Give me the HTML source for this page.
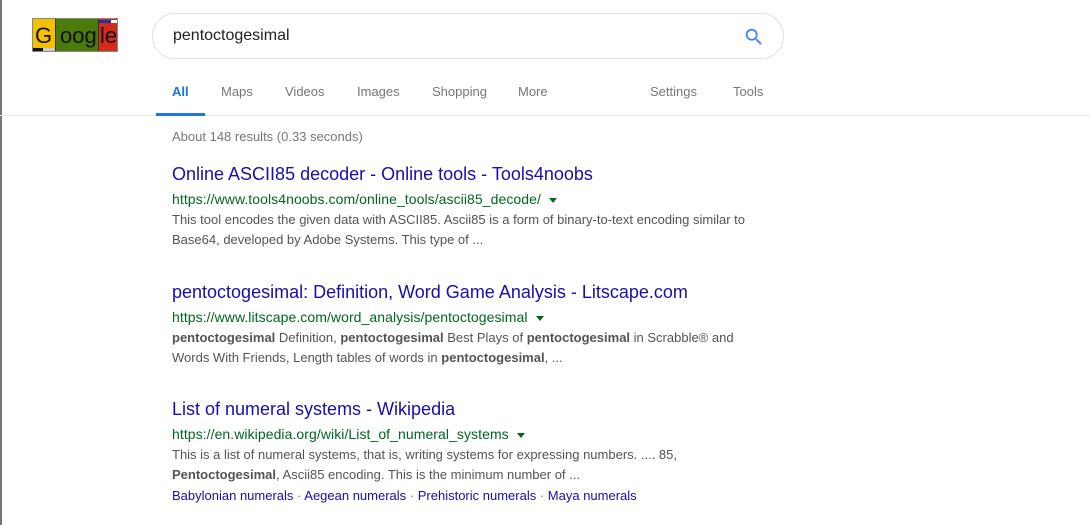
<!DOCTYPE html>
<html><head><meta charset="utf-8"><style>
*{margin:0;padding:0;box-sizing:border-box}
body{width:1090px;height:525px;background:#fff;font-family:"Liberation Sans",Arial,sans-serif;position:relative;overflow:hidden}
.abs{position:absolute}
.lb{left:0;top:0;width:2px;height:525px;background:#777}
.logo{left:32px;top:18px;width:86px;height:34px;border:1px solid #888;background:#4a7a0a}
.logo .y{position:absolute;left:0;top:0;width:23px;height:32px;background:#f5c000;border-right:1px solid #333}
.logo .r{position:absolute;left:65px;top:0;width:19px;height:32px;background:#d42a1a;border-left:1px solid #333}
.logo .t{position:absolute;font-size:22px;color:#111;line-height:22px;top:6px}
.logo .bb{position:absolute;left:66px;top:1px;width:12px;height:3px;background:#2233aa}
.logo .wb{position:absolute;left:78px;top:1px;width:6px;height:3px;background:#fff}
.logo .kb{position:absolute;left:0;top:29px;width:10px;height:3px;background:#111}
.logo .gb{position:absolute;left:10px;top:29px;width:12px;height:3px;background:#ccc}
.search{left:152px;top:13px;width:632px;height:46px;border:1px solid #dfe1e5;border-radius:23px}
.search span{position:absolute;left:20px;top:13px;font-size:16px;color:#222}
.search svg{position:absolute;right:18px;top:12px}
.tab{top:84px;font-size:13px;color:#777}
.ul{left:156px;top:113px;width:49px;height:3px;background:#1a73e8}
.hr{left:0;top:115px;width:1090px;height:1px;background:#ebebeb}
.stats{left:172px;top:129px;font-size:13px;color:#777}
.t1{font-size:18px;color:#1a0dab;left:172px}
.url{font-size:14px;color:#006621;left:172px;letter-spacing:0.07px}
.url i{display:inline-block;border-left:4px solid transparent;border-right:4px solid transparent;border-top:5px solid #006621;margin-left:8px;vertical-align:middle}
.sn{font-size:13px;color:#545454;left:172px;line-height:20px;width:600px}
.sn b{color:#545454}
.sl{font-size:13px;color:#1a0dab;left:172px}
.sl span{color:#777}
</style></head><body>
<div class="abs lb"></div>
<div class="abs logo"><div class="y"></div><div class="r"></div><div class="bb"></div><div class="wb"></div><div class="kb"></div><div class="gb"></div>
<div class="t" style="left:2px">G</div><div class="t" style="left:27px">oog</div><div class="t" style="left:67px">le</div></div>
<div class="abs search"><span>pentoctogesimal</span>
<svg width="22" height="22" viewBox="0 0 24 24"><path fill="#4285f4" d="M15.5 14h-.79l-.28-.27A6.47 6.47 0 0 0 16 9.5 6.5 6.5 0 1 0 9.5 16c1.61 0 3.090-.59 4.23-1.57l.27.28v.79l5 4.99L20.490 19l-4.99-5zm-6 0C7.01 14 5 11.99 5 9.5S7.01 5 9.5 5 14 7.01 14 9.5 11.99 14 9.5 14z"/></svg></div>
<div class="abs tab" style="left:172px;color:#1a73e8;font-weight:bold">All</div>
<div class="abs tab" style="left:221px">Maps</div>
<div class="abs tab" style="left:285px">Videos</div>
<div class="abs tab" style="left:357px">Images</div>
<div class="abs tab" style="left:432px">Shopping</div>
<div class="abs tab" style="left:518px">More</div>
<div class="abs tab" style="left:650px">Settings</div>
<div class="abs tab" style="left:733px">Tools</div>
<div class="abs hr"></div>
<div class="abs ul"></div>
<div class="abs stats">About 148 results (0.33 seconds)</div>

<div class="abs t1" style="top:164px">Online ASCII85 decoder - Online tools - Tools4noobs</div>
<div class="abs url" style="top:191px">https://www.tools4noobs.com/online_tools/ascii85_decode/<i></i></div>
<div class="abs sn" style="top:210px">This tool encodes the given data with ASCII85. Ascii85 is a form of binary-to-text encoding similar to Base64, developed by Adobe Systems. This type of ...</div>

<div class="abs t1" style="top:282px">pentoctogesimal: Definition, Word Game Analysis - Litscape.com</div>
<div class="abs url" style="top:309px">https://www.litscape.com/word_analysis/pentoctogesimal<i></i></div>
<div class="abs sn" style="top:328px"><b>pentoctogesimal</b> Definition, <b>pentoctogesimal</b> Best Plays of <b>pentoctogesimal</b> in Scrabble® and Words With Friends, Length tables of words in <b>pentoctogesimal</b>, ...</div>

<div class="abs t1" style="top:399px">List of numeral systems - Wikipedia</div>
<div class="abs url" style="top:426px">https://en.wikipedia.org/wiki/List_of_numeral_systems<i></i></div>
<div class="abs sn" style="top:445px">This is a list of numeral systems, that is, writing systems for expressing numbers. .... 85, <b>Pentoctogesimal</b>, Ascii85 encoding. This is the minimum number of ...</div>
<div class="abs sl" style="top:488px">Babylonian numerals <span>·</span> Aegean numerals <span>·</span> Prehistoric numerals <span>·</span> Maya numerals</div>
</body></html>
